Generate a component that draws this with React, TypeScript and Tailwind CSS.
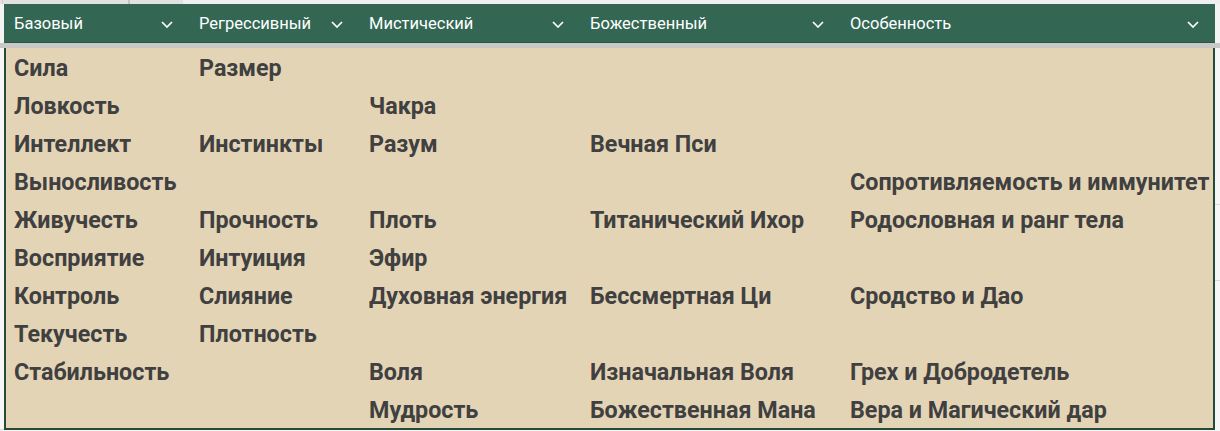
const headers = ["Базовый", "Регрессивный", "Мистический", "Божественный", "Особенность"]

const rows: string[][] = [
    ["Сила", "Размер", "", "", ""],
    ["Ловкость", "", "Чакра", "", ""],
    ["Интеллект", "Инстинкты", "Разум", "Вечная Пси", ""],
    ["Выносливость", "", "", "", "Сопротивляемость и иммунитет"],
    ["Живучесть", "Прочность", "Плоть", "Титанический Ихор", "Родословная и ранг тела"],
    ["Восприятие", "Интуиция", "Эфир", "", ""],
    ["Контроль", "Слияние", "Духовная энергия", "Бессмертная Ци", "Сродство и Дао"],
    ["Текучесть", "Плотность", "", "", ""],
    ["Стабильность", "", "Воля", "Изначальная Воля", "Грех и Добродетель"],
    ["", "", "Мудрость", "Божественная Мана", "Вера и Магический дар"],
]

const Chevron = () => (
    <svg width="12" height="7" viewBox="0 0 12 7" fill="none">
        <path d="M1 1 L6 6 L11 1" stroke="white" strokeWidth="1.7" />
    </svg>
)

const App = () => {
    return (
        <div className="w-[1220px] h-[431px] overflow-hidden bg-[#f6f6f6] font-['Roboto',sans-serif] flex flex-col">
            {/* sheet strip above the table */}
            <div className="h-[4px] flex">
                <div className="w-[3px] bg-[#e2e2e2] border-r border-[#cfcfcf]" />
                <div className="w-[127px] bg-[#e2e2e2] border-r-2 border-[#c4c4c4]" />
                <div className="w-[53px] bg-[#e2e2e2]" />
                <div className="flex-1 bg-[#eeeff1]" />
            </div>

            <div className="flex">
                <div className="w-[4px] bg-[#f3f3f3]" />
                <div className="w-[1211px] h-[39px] bg-[#336754] border-b border-[#2b5646] grid grid-cols-[185px_170px_221px_260px_375px]">
                    {headers.map(h => (
                        <div key={h} className="flex items-center justify-between pt-[2px] pl-[10px] pr-[16px] text-[16.5px] text-white">
                            <span>{h}</span>
                            <Chevron />
                        </div>
                    ))}
                </div>
                <div className="flex-1 bg-[#f3f3f3]" />
            </div>

            <div className="h-[5px] bg-[#c8c8c8]" />

            <div className="flex">
                <div className="w-[4px] border-b border-[#d6d6d6]" />
                <div className="w-[1211px] bg-[#e4d4b6] border-l-2 border-r-2 border-b-2 border-[#244a38]">
                    {rows.map((row, i) => (
                        <div key={i} className="h-[38px] grid grid-cols-[183px_170px_221px_260px_373px]">
                            {row.map((cell, j) => (
                                <div key={j} className={`flex items-center pt-[3px] text-[23.3px] font-bold text-[#404040] whitespace-nowrap ${j === 0 ? "pl-[8px]" : "pl-[10px]"}`}>
                                    {cell}
                                </div>
                            ))}
                        </div>
                    ))}
                </div>
                <div className="flex-1 flex flex-col">
                    <div className="h-[157px] border-b border-[#d9d9d9]" />
                    <div className="h-[76px] border-b border-[#d9d9d9]" />
                </div>
            </div>
        </div>
    )
}

export default App
